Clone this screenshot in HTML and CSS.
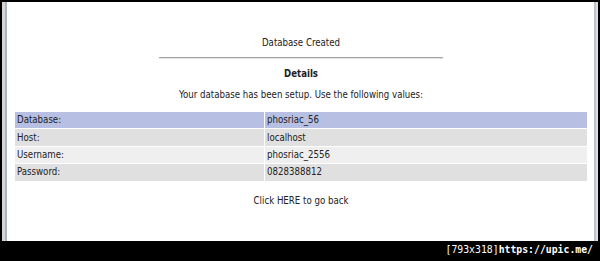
FILE: index.html
```html
<!DOCTYPE html>
<html lang="en">
<head>
    <meta charset="UTF-8">
    <title>Database Created</title>
    <link rel="stylesheet" href="styles.css">
</head>
<body>
    <div class="screen">
        <div class="window">
            <div class="pane">
                <div class="title">Database Created</div>
                <div class="rule"></div>
                <div class="details">Details</div>
                <p class="intro">Your database has been setup. Use the following values:</p>
                <table class="values">
                    <tr class="head"><td class="key">Database:</td><td>phosriac_56</td></tr>
                    <tr class="dark"><td class="key">Host:</td><td>localhost</td></tr>
                    <tr class="light"><td class="key">Username:</td><td>phosriac_2556</td></tr>
                    <tr class="dark"><td class="key">Password:</td><td>0828388812</td></tr>
                </table>
                <p class="back">Click <a href="#">HERE</a> to go back</p>
            </div>
        </div>
        <div class="caption">[793x318]<b>https://upic.me/</b></div>
    </div>
</body>
</html>
```
FILE: styles.css
```css
body {
    margin: 0;
    background-color: #000;
    font-family: "DejaVu Sans Condensed", "DejaVu Sans", sans-serif;
    font-size: 9.6px;
    line-height: 12px;
    color: #222;
}

.screen {
    width: 600px;
    height: 261px;
    padding: 2px 2px 0 2px;
    box-sizing: border-box;
}

.window {
    border-left: 3px solid #d6d6d6;
    border-right: 2px solid #dedede;
}

.pane {
    height: 239px;
    box-sizing: border-box;
    background-color: #fff;
    border-left: 2px solid #a9b5c8;
    border-right: 2px solid #b6c3d7;
    padding: 35px 6px 0 7px;
    text-align: center;
}

.rule {
    width: 284px;
    margin: 8px auto 0;
    border-top: 1px solid #a4a4a4;
    border-bottom: 1px solid #e4e4e4;
}

.details {
    margin-top: 9px;
    font-weight: bold;
}

.intro {
    margin: 9px 0 0;
}

.values {
    width: 100%;
    margin-top: 10px;
    border-spacing: 1px;
    text-align: left;
}

.values td {
    height: 16.4px;
    padding: 0 2px;
    vertical-align: middle;
}

.values td.key {
    width: 245px;
}

.values tr.head td {
    background-color: #b7bfe2;
}

.values tr.dark td {
    background-color: #e0e0e0;
}

.values tr.light td {
    background-color: #efefef;
}

.back {
    margin: 13px 0 0;
}

.back a {
    color: #222;
    text-decoration: none;
}

.caption {
    padding: 2px 5px 0 0;
    text-align: right;
    color: #fff;
    font-family: "DejaVu Sans Mono", monospace;
    font-size: 9.8px;
    line-height: 14px;
}

.caption b {
    font-weight: bold;
}
```
